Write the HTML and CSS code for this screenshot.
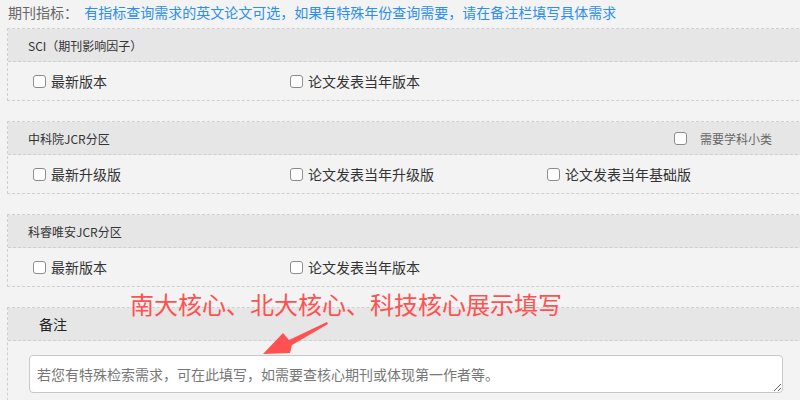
FILE: index.html
```html
<!DOCTYPE html>
<html>
<head>
    <meta charset="utf-8">
    <title>期刊指标</title>
    <link rel="stylesheet" href="styles.css">
</head>
<body>
    <div class="top-line">
        <span class="top-label">期刊指标：</span>
        <span class="top-tip">有指标查询需求的英文论文可选，如果有特殊年份查询需要，请在备注栏填写具体需求</span>
    </div>

    <div class="section">
        <div class="section-head">SCI（期刊影响因子）</div>
        <div class="section-body">
            <label class="option"><input type="checkbox"><span>最新版本</span></label>
            <label class="option"><input type="checkbox"><span>论文发表当年版本</span></label>
        </div>
    </div>

    <div class="section">
        <div class="section-head">
            <span>中科院JCR分区</span>
            <label class="head-option"><input type="checkbox"><span>需要学科小类</span></label>
        </div>
        <div class="section-body">
            <label class="option"><input type="checkbox"><span>最新升级版</span></label>
            <label class="option"><input type="checkbox"><span>论文发表当年升级版</span></label>
            <label class="option"><input type="checkbox"><span>论文发表当年基础版</span></label>
        </div>
    </div>

    <div class="section">
        <div class="section-head">科睿唯安JCR分区</div>
        <div class="section-body">
            <label class="option"><input type="checkbox"><span>最新版本</span></label>
            <label class="option"><input type="checkbox"><span>论文发表当年版本</span></label>
        </div>
    </div>

    <div class="section">
        <div class="section-head remark-head">备注</div>
        <div class="remark-body">
            <textarea class="remark" placeholder="若您有特殊检索需求，可在此填写，如需要查核心期刊或体现第一作者等。"></textarea>
        </div>
    </div>

    <!-- annotation over the form -->
    <div class="note">南大核心、北大核心、科技核心展示填写</div>
    <svg class="arrow" width="80" height="50" viewBox="0 0 80 50">
        <polygon points="3,44 23,23 29,30 67,12 68,14 32,35 30,43" fill="#ff5151"/>
    </svg>
</body>
</html>
```

FILE: styles.css
```css
html, body {
    overflow: hidden;
}

body {
    font-family: "Noto Sans CJK SC", "Noto Sans", sans-serif;
    margin: 0;
    padding: 0;
    background-color: #f3f3f3;
    color: #333;
    position: relative;
    height: 400px;
}

.top-line {
    height: 20px;
    line-height: 20px;
    padding: 2px 0 0 8px;
    margin-bottom: 6px;
    font-size: 14px;
    white-space: nowrap;
}

.top-label {
    color: #666;
}

.top-tip {
    color: #2b8ef0;
    margin-left: 3px;
}

.section {
    width: 800px;
    margin: 0 0 20px 7px;
    border: 1px dashed #cfcfcf;
}

.section-head {
    height: 32px;
    display: flex;
    align-items: center;
    padding: 0 36px 0 20px;
    background-color: #e6e6e6;
    border-bottom: 1px dashed #cfcfcf;
    font-size: 12px;
    color: #333;
}

.head-option {
    margin-left: auto;
    display: flex;
    align-items: center;
    color: #666;
}

.head-option span {
    margin-left: 13px;
}

.section-body {
    height: 38px;
    display: grid;
    grid-template-columns: 257px 257px 257px;
    align-items: center;
    padding-left: 25px;
}

.option {
    display: flex;
    align-items: center;
    font-size: 14px;
    color: #333;
}

.option span {
    margin-left: 5px;
}

input[type="checkbox"] {
    appearance: none;
    -webkit-appearance: none;
    width: 13px;
    height: 13px;
    margin: 0;
    border: 1px solid #8c8c8c;
    border-radius: 3px;
    background-color: #fff;
    box-sizing: border-box;
}

.remark-head {
    padding-left: 31px;
    font-size: 14px;
    color: #222;
}

.remark-body {
    padding: 14px 0 0 21px;
    height: 60px;
}

.remark {
    display: block;
    width: 754px;
    height: 38px;
    box-sizing: border-box;
    padding: 8px 7px;
    border: 1px solid #c8c8c8;
    border-radius: 4px;
    background-color: #fff;
    font-family: "Noto Sans CJK SC", sans-serif;
    font-size: 14px;
    line-height: 20px;
    resize: vertical;
}

.remark::placeholder {
    color: #777;
}

.note {
    position: absolute;
    left: 130px;
    top: 291px;
    font-size: 24px;
    line-height: 26px;
    color: #ff5151;
    white-space: nowrap;
}

.arrow {
    position: absolute;
    left: 260px;
    top: 310px;
}
```
